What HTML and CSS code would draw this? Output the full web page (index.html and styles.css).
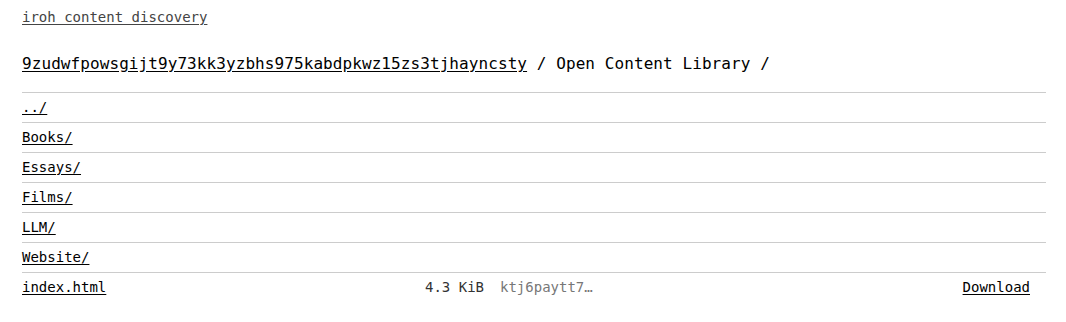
FILE: index.html
```html
<!DOCTYPE html>
<html>
<head>
<meta charset="utf-8">
<link rel="stylesheet" href="styles.css">
</head>
<body>
<header class="top"><a class="brand" href="#">iroh content discovery</a></header>
<h1 class="crumbs"><a href="#">9zudwfpowsgijt9y73kk3yzbhs975kabdpkwz15zs3tjhayncsty</a> / Open Content Library /</h1>
<div class="list">
  <div class="row"><a href="#">../</a></div>
  <div class="row"><a href="#">Books/</a></div>
  <div class="row"><a href="#">Essays/</a></div>
  <div class="row"><a href="#">Films/</a></div>
  <div class="row"><a href="#">LLM/</a></div>
  <div class="row"><a href="#">Website/</a></div>
  <div class="row file">
    <a href="#">index.html</a>
    <span class="size">4.3 KiB</span>
    <span class="hash">ktj6paytt7…</span>
    <a class="dl" href="#">Download</a>
  </div>
</div>
</body>
</html>
```
FILE: styles.css
```css
html, body {
  margin: 0;
  background: #fff;
}
body {
  padding: 8px 20px 0 22px;
  font-family: "DejaVu Sans Mono", "Liberation Mono", monospace;
  font-size: 14px;
  color: #000;
}
a {
  color: #000;
  text-decoration: underline;
  text-underline-offset: 2px;
}
.top {
  line-height: 18px;
}
.brand {
  color: #444;
}
.crumbs {
  margin: 28px 0 18px;
  font-size: 16px;
  font-weight: normal;
  line-height: 20px;
  letter-spacing: 0.08px;
}
.row {
  border-top: 1px solid #ccc;
  height: 29px;
  line-height: 29px;
}
.file {
  display: grid;
  grid-template-columns: 387px auto auto 1fr;
  column-gap: 16px;
  padding-right: 16px;
}
.size {
  color: #333;
}
.hash {
  color: #777;
}
.dl {
  justify-self: end;
}
```
